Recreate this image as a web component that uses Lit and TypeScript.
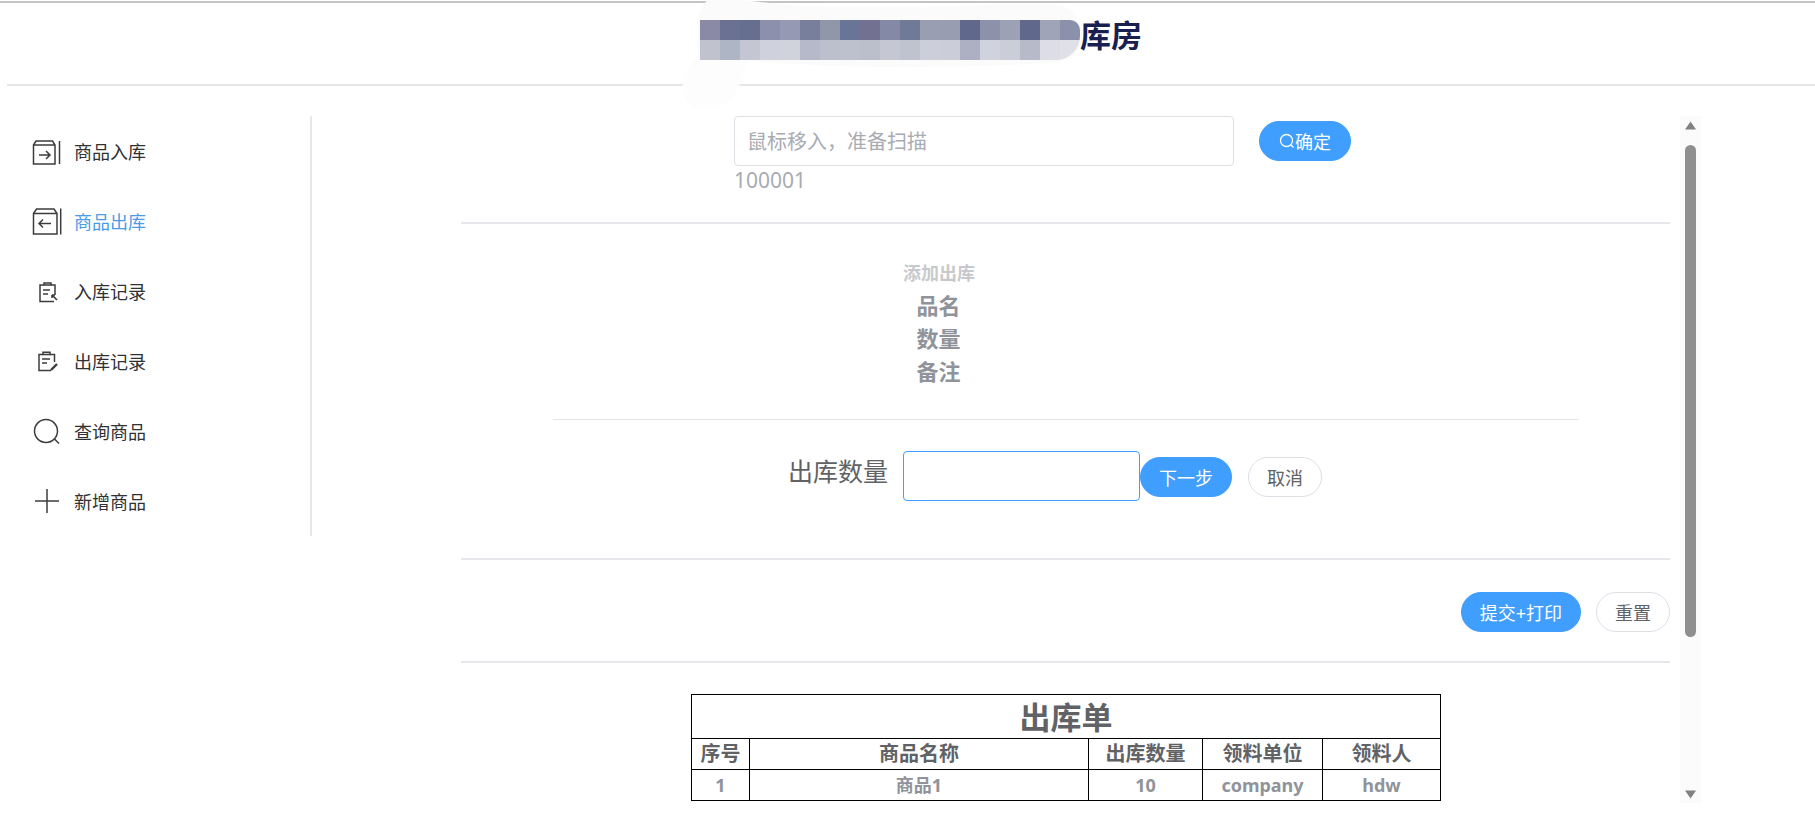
import { LitElement, html, css, svg } from "lit";
import { customElement } from "lit/decorators.js";

const row1 = ["#8a8aa6","#6a7192","#676f90","#8d90ac","#9599b3","#787f9d","#9097a9","#697597","#727192","#8489a6","#6f7a99","#9a9eb1","#999db1","#60688c","#8d92ac","#9da1b5","#60698b","#a0a4b7","#8c91ab"];
const row2 = ["#c0c2ce","#aeb5c4","#c4c6d3","#cfd1dc","#d0d3dc","#b5b9ca","#bcbfcc","#bdc1ce","#bbbecb","#c5c7d3","#bec3cf","#cccfd9","#cbced8","#adb0c2","#d0d2dd","#cbcdd8","#b7bac9","#dddee5","#e0e1e7"];

const icons = [
  svg`<path d="M1.5 10 L4 6 H20.5 L23 10 V29 H1.5 Z M1.5 10 H23"/><path d="M7 20 H18 M14 16 L18 20 L14 24"/><path d="M27.5 6 V29"/>`,
  svg`<path d="M1.5 8.5 L4.5 4 H22 L25 8.5 V29 H1.5 Z M1.5 8.5 H25"/><path d="M19 18.5 H7 M11 14.5 L7 18.5 L11 22.5"/><path d="M28.7 3.5 V29.5"/>`,
  svg`<path d="M12 10 H8 V26.5 H22 M19 10 H23 V20"/><path d="M12 10 V8 H19 V10 Z"/><path d="M11 15 H18 M11 19 H16"/><path d="M20 20 L25 25 M20 20 H23 M20 20 V23" stroke-width="1.6"/>`,
  svg`<path d="M11 9.5 H7 V25.5 H19 M18 9.5 H22.5 V17"/><path d="M11 9.5 V7.2 H18 V9.5 Z"/><path d="M10 14 H18 M10 18 H15"/><path d="M19 25 L25 19" stroke-width="2.4"/>`,
  svg`<circle cx="14" cy="16" r="11.5"/><path d="M22.5 24 L27 28.5"/>`,
  svg`<path d="M3 16 H27 M15 4 V28"/>`,
];
const labels = ["商品入库", "商品出库", "入库记录", "出库记录", "查询商品", "新增商品"];

@customElement("app-root")
export class AppRoot extends LitElement {
  static styles = css`
    :host {
      display: block;
      position: relative;
      height: 828px;
      overflow: hidden;
      background: #fff;
      padding-top: 1px;
      box-sizing: border-box;
      font-family: "Noto Sans", "Noto Sans CJK SC", sans-serif;
      color: #606266;
    }
    .topline { height: 2px; background: #c4c4c4; }
    .header {
      margin-left: 7px;
      height: 83px;
      border-bottom: 2px solid #e6e7eb;
      padding-left: 693px;
      padding-top: 17px;
      box-sizing: border-box;
      display: flex;
      align-items: flex-start;
    }
    .mosaic {
      position: relative;
      z-index: 2;
      display: grid;
      grid-template-columns: repeat(19, 20px);
      grid-auto-rows: 20px;
      border-radius: 0 10px 24px 0;
      overflow: hidden;
    }
    .title {
      position: relative;
      z-index: 2;
      font-size: 31px;
      line-height: 31px;
      font-weight: 700;
      color: #19204f;
    }
    .blob { position: absolute; left: 0; top: 0; z-index: 1; }
    .body { display: flex; padding-top: 30px; }
    .side {
      width: 312px;
      height: 420px;
      box-sizing: border-box;
      border-right: 2px solid #e6e7eb;
      flex: none;
    }
    .item {
      height: 70px;
      display: flex;
      align-items: center;
      padding-left: 32px;
      gap: 10px;
      font-size: 18px;
      color: #303133;
    }
    .item.on { color: #4a9be8; }
    .item svg { fill: none; stroke: #3c3c3c; stroke-width: 1.5; flex: none; }
    .main { width: 1209px; margin-left: 149px; flex: none; }
    .sec1 { height: 108px; border-bottom: 2px solid #e6e7eb; box-sizing: border-box; }
    .scan { display: flex; align-items: center; padding-left: 273px; gap: 25px; }
    input {
      box-sizing: border-box;
      height: 50px;
      border: 1px solid #dcdfe6;
      border-radius: 4px;
      outline: none;
      background: #fff;
      font: inherit;
      font-size: 20px;
      padding: 0 12px;
      color: #606266;
    }
    input::placeholder { color: #a8abb2; }
    .w500 { width: 500px; }
    .w237 { width: 237px; border-color: #409eff; }
    .code { padding-left: 273px; font-size: 21px; line-height: 28px; color: #a8abb2; }
    .sec2 { padding-top: 36px; }
    .facts { margin-left: 442px; width: 71px; text-align: center; }
    .facts .cap { font-size: 18px; line-height: 27px; font-weight: 700; color: #c8c9cc; margin-bottom: 2px; white-space: nowrap; }
    .facts .f { font-size: 22px; line-height: 33px; font-weight: 700; color: #909399; }
    .hr { height: 1px; margin: 31px 91px 0 92px; background: #e4e5e9; }
    .sec3 {
      height: 140px;
      box-sizing: border-box;
      border-bottom: 2px solid #e6e7eb;
      padding-top: 31px;
      padding-left: 327px;
      display: flex;
      align-items: flex-start;
    }
    .lab { width: 115px; font-size: 25px; line-height: 41px; color: #606266; flex: none; white-space: nowrap; }
    .btn {
      box-sizing: border-box;
      height: 40px;
      border-radius: 20px;
      padding: 0 18px;
      display: inline-flex;
      align-items: center;
      font-size: 18px;
      white-space: nowrap;
      border: 1px solid #dcdfe6;
      background: #fff;
      color: #606266;
      flex: none;
    }
    .btn.p { background: #409eff; border-color: #409eff; color: #fff; }
    .btn svg { fill: none; stroke: #fff; stroke-width: 1.3; flex: none; }
    .scan .btn { padding: 0 19px; }
    .sec3 .btn { margin-top: 6px; }
    .sec3 .btn + .btn { margin-left: 16px; }
    .sec4 {
      height: 103px;
      box-sizing: border-box;
      border-bottom: 2px solid #e6e7eb;
      padding-top: 32px;
      display: flex;
      justify-content: flex-end;
      gap: 15px;
    }
    .wrap { padding: 31px 0 0 230px; }
    table {
      width: 749px;
      table-layout: fixed;
      border-collapse: collapse;
      text-align: center;
    }
    td, th { border: 1px solid #000; padding: 0; overflow: hidden; }
    .tt { height: 43px; font-size: 31px; font-weight: 700; color: #606266; line-height: 40px; }
    .th th { height: 30px; font-size: 20px; line-height: 30px; font-weight: 700; color: #606266; }
    .tr td { height: 30px; font-size: 18px; line-height: 30px; font-weight: 700; color: #909399; }
    .track {
      width: 21px;
      height: 687px;
      margin-left: 10px;
      background: #fbfbfb;
      flex: none;
      display: flex;
      flex-direction: column;
      align-items: center;
      padding-top: 5px;
      box-sizing: border-box;
    }
    .thumb { width: 11px; height: 492px; margin-top: 15px; border-radius: 6px; background: #8f8f8f; }
    .down { margin-top: 153px; }
    .track svg { fill: #808080; flex: none; }
  `;

  render() {
    return html`
      <div class="topline"></div>
      <div class="header">
        <div class="mosaic">
          ${[...row1, ...row2].map((c) => html`<span style="background:${c}"></span>`)}
        </div>
        <div class="title">库房</div>
      </div>
      <svg class="blob" width="1100" height="115" viewBox="0 0 1100 115">
        <path fill="#fdfdfd" d="M750 56 L740 84 C735 100 722 110 700 109 C686 106 680 92 684 78 C692 62 698 56 700 50 Z"/>
        <path fill="#fbfbfb" d="M708 0 H742 C790 6 830 8 900 7 C960 6 1020 3 1055 4 C1072 6 1082 20 1082 36 C1082 52 1068 62 1050 63 C960 68 840 70 746 60 L700 60 C698 50 698 50 697 36 C696 20 700 6 708 0 Z"/>
      </svg>
      <div class="body">
        <nav class="side">
          ${labels.map(
            (l, i) => html`<div class="item ${i === 1 ? "on" : ""}">
              <svg width="32" height="32" viewBox="0 0 32 32">${icons[i]}</svg><span>${l}</span>
            </div>`
          )}
        </nav>
        <main class="main">
          <section class="sec1">
            <div class="scan">
              <input class="w500" placeholder="鼠标移入，准备扫描" />
              <span class="btn p"
                ><svg width="16" height="16" viewBox="0 0 16 16"><circle cx="7.5" cy="7.5" r="6"/><path d="M12 12 L14.5 14.5"/></svg
                ><span>确定</span></span
              >
            </div>
            <div class="code">100001</div>
          </section>
          <section class="sec2">
            <div class="facts">
              <div class="cap">添加出库</div>
              <div class="f">品名</div>
              <div class="f">数量</div>
              <div class="f">备注</div>
            </div>
            <div class="hr"></div>
          </section>
          <section class="sec3">
            <div class="lab">出库数量</div>
            <input class="w237" />
            <span class="btn p">下一步</span>
            <span class="btn">取消</span>
          </section>
          <section class="sec4">
            <span class="btn p">提交+打印</span>
            <span class="btn">重置</span>
          </section>
          <div class="wrap">
            <table>
              <colgroup>
                <col style="width:58px" /><col style="width:339px" /><col style="width:114px" /><col style="width:120px" /><col style="width:118px" />
              </colgroup>
              <tr><td class="tt" colspan="5">出库单</td></tr>
              <tr class="th"><th>序号</th><th>商品名称</th><th>出库数量</th><th>领料单位</th><th>领料人</th></tr>
              <tr class="tr"><td>1</td><td>商品1</td><td>10</td><td>company</td><td>hdw</td></tr>
            </table>
          </div>
        </main>
        <div class="track">
          <svg width="11" height="9" viewBox="0 0 11 9"><path d="M5.5 0.5 L11 8.5 H0 Z"/></svg>
          <div class="thumb"></div>
          <svg class="down" width="11" height="9" viewBox="0 0 11 9"><path d="M0 0.5 H11 L5.5 8.5 Z"/></svg>
        </div>
      </div>
    `;
  }
}
